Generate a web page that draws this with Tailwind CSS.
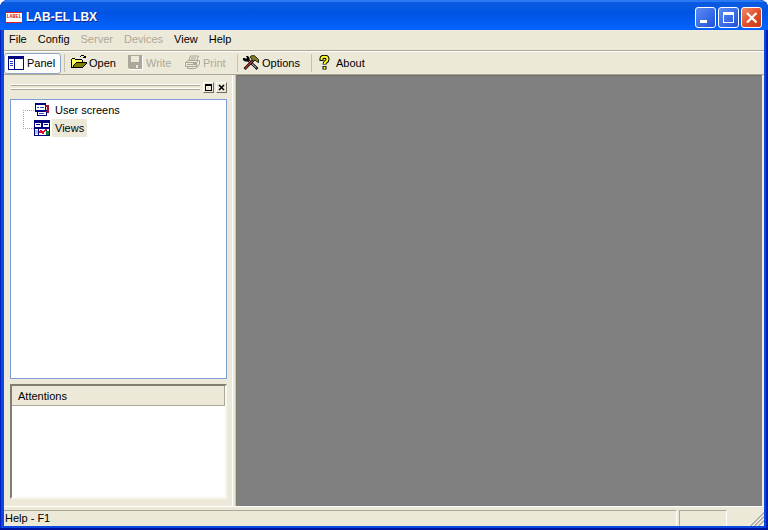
<!DOCTYPE html>
<html lang="en">
	<head>
		<meta charset="utf-8">
		<meta name="viewport" content="width=device-width, initial-scale=1">
		<title>LAB-EL LBX</title>
		<script src="https://cdn.jsdelivr.net/npm/@tailwindcss/browser@4"></script>
	</head>
	<body class="bg-white">
		<div class="h-screen flex flex-col overflow-hidden rounded-t-lg bg-[#0a48e0] shadow-[inset_0_-2px_#00129c,inset_1px_0_#0020c0,inset_-2px_0_#0020b0] font-['Liberation_Sans',Arial,sans-serif] text-[11px] leading-4 text-black">
			<!-- title bar -->
			<header class="h-[30px] shrink-0 flex items-center px-1.5 pt-1 pb-0.5 bg-linear-to-b from-[#0a5be0] from-0% via-[#0054e3] via-40% to-[#0262fb] to-90% border-t-2 border-[#2a7af5]">
				<span class="w-4 h-[11px] mr-1 shrink-0 flex items-center justify-center bg-white border-y border-[#e02020] font-['Liberation_Mono',monospace] text-[5px] leading-[9px] font-bold text-[#e02020]">LABEL</span>
				<h1 class="grow text-xs font-bold text-white [text-shadow:1px_1px_#0a2a90]">LAB-EL LBX</h1>
				<div class="flex gap-0.5">
					<button class="w-[21px] h-[21px] border border-white rounded-[3px] bg-linear-to-br from-[#5d8cf5] to-[#1f50d8]" aria-label="Minimize">
						<svg class="w-[19px] h-[19px]" viewBox="0 0 19 19"><path fill="#fff" d="M4 12h7v3H4z"/></svg>
					</button>
					<button class="w-[21px] h-[21px] border border-white rounded-[3px] bg-linear-to-br from-[#5d8cf5] to-[#1f50d8]" aria-label="Maximize">
						<svg class="w-[19px] h-[19px]" viewBox="0 0 19 19"><path fill="#fff" fill-rule="evenodd" d="M4 4h11v11H4zM5 7v7h9V7z"/></svg>
					</button>
					<button class="w-[21px] h-[21px] border border-white rounded-[3px] bg-linear-to-br from-[#f08a68] via-[#e0502a] to-[#c83a12]" aria-label="Close">
						<svg class="w-[19px] h-[19px]" viewBox="0 0 19 19"><path fill="none" stroke="#fff" stroke-width="2.200" d="M5 5l9.500 9.500M14.500 5L5 14.500"/></svg>
					</button>
				</div>
			</header>

			<div class="grow min-h-0 mx-1 mb-1 flex flex-col bg-[#ece9d8]">
				<nav class="h-[21px] shrink-0 flex items-center gap-[11px] pl-[5px] pb-[3px] border-b border-[#aca899]">
					<button>File</button>
					<button>Config</button>
					<button class="text-[#aca899]" disabled>Server</button>
					<button class="text-[#aca899]" disabled>Devices</button>
					<button>View</button>
					<button>Help</button>
				</nav>

				<!-- toolbar -->
				<div class="h-6 shrink-0 flex items-center border-t border-white border-b border-b-[#aca899]" role="toolbar">
					<button class="w-[57px] h-[21px] flex items-center gap-[3px] pl-[3px] rounded-[3px] border border-[#8ea6c8] bg-[#fcfcfa]" aria-pressed="true">
						<svg class="w-4 h-4" viewBox="0 0 16 16" shape-rendering="crispEdges">
							<path fill="#000080" d="M0 1h16v14H0z"/>
							<path fill="#fff" d="M1 4h5v10H1zM7 4h8v10H7z"/>
							<path fill="#2040c0" d="M2 6h3v1H2zM2 8h3v1H2zM2 10h3v1H2z"/>
						</svg>
						Panel
					</button>
					<span class="w-px h-[18px] mx-[3px] bg-[#c5c2b2]"></span>
					<button class="w-[57px] flex items-center gap-0.5 pl-[3px]">
						<svg class="w-4 h-4" viewBox="0 0 16 16" shape-rendering="crispEdges">
							<path fill="#ffff60" d="M1 4h3l1 1h6v3H4l-3 5z"/>
							<path fill="#808000" d="M5 8h10l-4 5H1z"/>
							<path fill="#000" d="M1 3h3v1H1zM0 4h1v9H0zM4 4h7v1H4zM11 5h1v3h-1zM5 7h11v1H5zM4 8h1v1H4zM3 9h1v1H3zM2 10h1v2H2zM15 8h1v1h-1zM14 9h1v1h-1zM13 10h1v1h-1zM12 11h1v1h-1zM1 12h11v1H1zM9 1h1v1H9zM10 0h3v1h-3zM13 1h1v1h-1zM12 3h3v-2h-1v1h-2z"/>
						</svg>
						Open
					</button>
					<button class="w-14 flex items-center gap-[3px] pl-0.5 text-[#aca899]" disabled>
						<svg class="w-4 h-4" viewBox="0 0 16 16" shape-rendering="crispEdges">
							<path fill="#fff" d="M2 1h14v14H2z"/>
							<path fill="#aca899" d="M1 0h14v14H2l-1-1z"/>
							<path fill="#ece9d8" d="M4 1h8v6H4zM9 10h2v3H9z"/>
						</svg>
						Write
					</button>
					<button class="w-14 flex items-center gap-[3px] pl-[3px] text-[#aca899]" disabled>
						<svg class="w-4 h-4" viewBox="0 0 16 16">
							<g fill="none" stroke="#aca899">
								<path d="M4.500 6l2-5h8L12.500 6M7 3h5M6 5h5M1.500 7.500l3-2h10l-2 2zM1.500 7.500v4h11v-4M12.500 11.500l3-2v-4h-1M3.500 11.500v2h8l3-2.500M3 9.500h7"/>
							</g>
							<path fill="#aca899" d="M9 8h3v2H9z"/>
						</svg>
						Print
					</button>
					<span class="w-px h-[18px] mr-0.5 bg-[#c5c2b2]"></span>
					<button class="w-[69px] flex items-center gap-[3px] pl-[3px]">
						<svg class="w-4 h-4" viewBox="0 0 16 16">
							<path fill="none" stroke="#000" stroke-width="2.600" d="M4 4l10.500 10"/>
							<path fill="none" stroke="#e8e8e8" d="M5 5l8.500 8"/>
							<path fill="none" stroke="#000" stroke-width="2.600" d="M1.500 14L11 4.500"/>
							<path fill="none" stroke="#c03030" stroke-width="1.200" d="M2 13.500L10.500 5"/>
							<path fill="#000" d="M0 3h2l1 1 1-1-1-2h2l1.500 2v2L5 6.500H2L0 5z"/>
							<path fill="#808020" stroke="#000" stroke-width=".8" d="M7 2l1.500-1.300h3l4 3.800v3l-2-1-1.500-1.500-1.500 1.500z"/>
						</svg>
						Options
					</button>
					<span class="w-px h-[18px] mx-0.5 bg-[#c5c2b2]"></span>
					<button class="flex items-center gap-0.5 pl-1">
						<svg class="w-4 h-4" viewBox="0 0 16 16">
							<path fill="none" stroke="#000" stroke-width="4" d="M3.500 6V3.800q0-2 3-2t3 2.400q0 1.500-1.500 2.500-1.500 1-1.500 2.800M6.500 11v3.500"/>
							<path fill="none" stroke="#ffff20" stroke-width="2" d="M3.500 5V3.800q0-2 3-2t3 2.400q0 1.500-1.500 2.500-1.500 1-1.500 2.300M6.500 11.700v2"/>
						</svg>
						About
					</button>
				</div>

				<div class="grow min-h-0 flex">
					<aside class="w-[233px] shrink-0 flex flex-col pl-1.5 pr-[9px] pb-[7px] border-r border-[#808070] shadow-[inset_-1px_0_#c8c5b4,inset_-3px_0_#ece9d8,inset_-4px_0_#fff]">
						<div class="h-6 shrink-0 flex items-center gap-0.5">
							<div class="grow mx-px h-[5px] border-y border-[#aca899] shadow-[0_-1px_#fff,inset_0_-1px_#fff]"></div>
							<button class="w-[11px] h-[11px] bg-[#ece9d8] border border-l-white border-t-white border-r-[#716f64] border-b-[#716f64]" aria-label="Float">
								<svg class="w-[9px] h-[9px]" viewBox="0 0 9 9" shape-rendering="crispEdges"><path fill="#000" fill-rule="evenodd" d="M1 1h7v7H1zM2 3v4h5V3z"/></svg>
							</button>
							<button class="w-[11px] h-[11px] bg-[#ece9d8] border border-l-white border-t-white border-r-[#716f64] border-b-[#716f64]" aria-label="Close panel">
								<svg class="w-[9px] h-[9px]" viewBox="0 0 9 9"><path fill="none" stroke="#000" stroke-width="1.600" d="M2 2l5 5M7 2L2 7"/></svg>
							</button>
						</div>

						<div class="grow flex items-start pt-px pl-3 bg-white border border-[#7f9ddb]">
							<div class="w-[11px] h-[19px] mt-[9px] border border-r-0 border-dotted border-[#aca899]"></div>
							<ul role="tree">
								<li class="h-[18px] flex items-center gap-0.5" role="treeitem">
									<svg class="w-4 h-4" viewBox="0 0 16 16" shape-rendering="crispEdges">
										<path fill="#a01030" d="M8 3h7v8H8z"/>
										<path fill="#f0d0d0" d="M9 5h4v4H9z"/>
										<path fill="#000080" d="M1 1h11v9H1zM3 8h10v6H3z"/>
										<path fill="#fff" d="M2 3h9v5H2zM4 10h8v3H4z"/>
										<path fill="#3050c0" d="M3 5h2v1H3zM6 5h4v1H6zM5 11h5v1H5z"/>
										<path fill="#a01030" d="M11 4h3v1h-3zM13 4h1v5h-1zM11 9h3v1h-3z"/>
									</svg>
									<span class="px-[3px]">User screens</span>
								</li>
								<li class="h-[18px] flex items-center gap-0.5" role="treeitem">
									<svg class="w-4 h-4" viewBox="0 0 16 16" shape-rendering="crispEdges">
										<path fill="#000080" d="M0 0h16v16H0z"/>
										<path fill="#fff" d="M1 3h6v4H1zM9 3h6v4H9zM1 9h3v6H1zM5 9h7v6H5zM13 9h2v3h-2z"/>
										<path fill="#000080" d="M2 4h4v1H2zM10 4h4v1h-4z"/>
										<path fill="#a0c8f0" d="M1 10h3v4H1z"/>
										<path fill="#108030" d="M12 11h3v4h-3z"/>
										<path fill="none" stroke="#e01030" stroke-width="1.500" d="M5 13l2-2 2 2 3-4"/>
									</svg>
									<span class="h-[18px] leading-[18px] px-[3px] bg-[#ece9d8]">Views</span>
								</li>
							</ul>
						</div>

						<table class="h-[115px] shrink-0 mt-[5px] flex flex-col bg-white border-2 border-l-[#808070] border-t-[#808070] border-r-[#f8f6ee] border-b-[#f8f6ee]">
							<thead class="block">
								<tr class="block">
									<th class="block h-5 leading-5 pl-1.5 text-left font-normal bg-[#ece9d8] border-r border-b border-[#aca899]">Attentions</th>
								</tr>
							</thead>
						</table>
					</aside>

					<main class="grow bg-[#808080] mr-0.5 border-t border-[#716f64]"></main>
				</div>

				<footer class="h-5 shrink-0 flex items-end gap-0.5 border-t border-white">
					<div class="grow h-4 leading-[15px] pl-px border-t border-r border-t-[#aca899] border-r-white">Help - F1</div>
					<div class="w-12 h-4 border border-l-[#aca899] border-t-[#aca899] border-r-white border-b-[#ece9d8]"></div>
					<div class="w-[35px] h-4 flex justify-end">
						<svg class="w-4 h-4" viewBox="0 0 16 16" aria-hidden="true">
							<path stroke="#fff" d="M1 16L16 1M5 16L16 5M9 16l7-7M13 16l3-3"/>
							<path stroke="#aca899" stroke-width="1.500" d="M2.500 16L16 2.500M6.500 16L16 6.500M10.500 16l5.500-5.500"/>
						</svg>
					</div>
				</footer>
			</div>
		</div>
	</body>
</html>
